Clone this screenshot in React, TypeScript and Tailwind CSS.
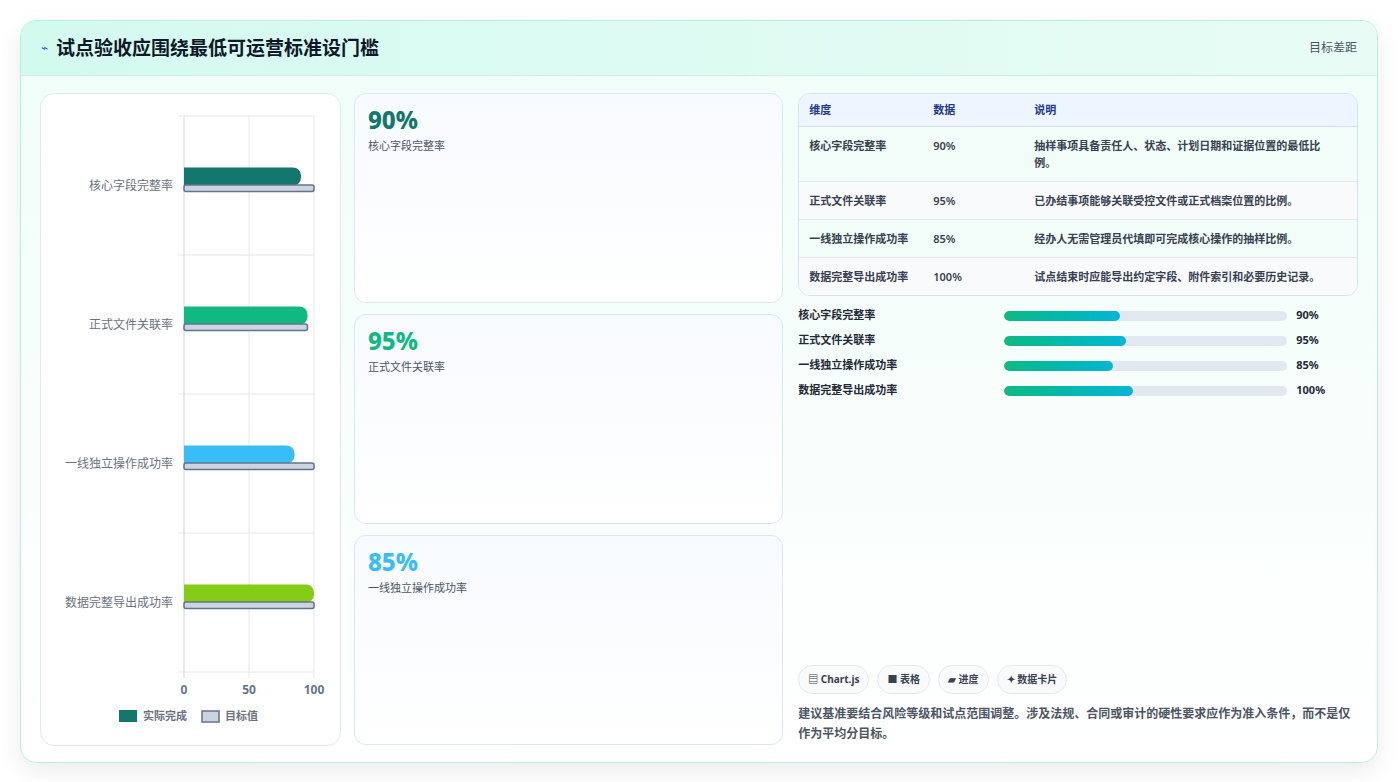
import React from "react";

const F = { fontFamily: '"Noto Sans","Noto Sans CJK SC",sans-serif' };

function Chart() {
  const cats = [
    { n: "核心字段完整率", a: 90, t: 100, c: "#13776d" },
    { n: "正式文件关联率", a: 95, t: 95, c: "#10b981" },
    { n: "一线独立操作成功率", a: 85, t: 100, c: "#38bdf8" },
    { n: "数据完整导出成功率", a: 100, t: 100, c: "#84cc16" },
  ];
  const x0 = 143, w = 130, y0 = 22, band = 139;
  return (
    <svg width="300" height="650" className="block">
      {[0, 1, 2, 3, 4].map((i) => (
        <line key={i} x1={137} x2={x0 + w} y1={y0 + i * band} y2={y0 + i * band} stroke="#e5e7eb" />
      ))}
      {[0, 0.5, 1].map((f, i) => (
        <line key={i} x1={x0 + f * w} x2={x0 + f * w} y1={y0} y2={y0 + 4 * band + 6} stroke={i === 0 ? "#d1d5db" : "#e5e7eb"} />
      ))}
      {cats.map((c, i) => {
        const cy = y0 + i * band + band / 2;
        const aw = (c.a / 100) * w, tw = (c.t / 100) * w;
        return (
          <g key={i}>
            <text x={132} y={cy + 4} textAnchor="end" fontSize="12" fill="#6b7280">{c.n}</text>
            <path d={`M${x0} ${cy - 18} H${x0 + aw - 8} a8 8 0 0 1 8 8 v2 a8 8 0 0 1 -8 8 H${x0} Z`} fill={c.c} />
            <rect x={x0} y={cy - 0.5} width={tw} height={6.5} rx={2} fill="#cbd5e1" stroke="#64748b" strokeWidth="1.5" />
          </g>
        );
      })}
      {[0, 50, 100].map((v, i) => (
        <text key={i} x={x0 + (v / 100) * w} y={600} textAnchor="middle" fontSize="12" fontWeight="700" fill="#64748b">{v}</text>
      ))}
      <rect x={78} y={616} width={18} height={12} fill="#13776d" />
      <text x={102} y={626} fontSize="11" fontWeight="700" fill="#6b7280">实际完成</text>
      <rect x={161} y={617} width={17} height={11} fill="#cbd5e1" stroke="#64748b" strokeWidth="1.5" />
      <text x={184} y={626} fontSize="11" fontWeight="700" fill="#6b7280">目标值</text>
    </svg>
  );
}

const rows = [
  ["核心字段完整率", "90%", "抽样事项具备责任人、状态、计划日期和证据位置的最低比例。"],
  ["正式文件关联率", "95%", "已办结事项能够关联受控文件或正式档案位置的比例。"],
  ["一线独立操作成功率", "85%", "经办人无需管理员代填即可完成核心操作的抽样比例。"],
  ["数据完整导出成功率", "100%", "试点结束时应能导出约定字段、附件索引和必要历史记录。"],
];
const prog = [["核心字段完整率", "90%", 116], ["正式文件关联率", "95%", 122], ["一线独立操作成功率", "85%", 109], ["数据完整导出成功率", "100%", 129]] as const;

export default function App() {
  return (
    <div style={F} className="w-[1399px] h-[782px] bg-white pt-[20px] px-[20px]">
      <div className="w-[1358px] h-[743px] rounded-[16px] border border-[#b9eee0] shadow-[0_8px_24px_rgba(0,0,0,0.08)] bg-gradient-to-b from-[#effdf8] to-white overflow-hidden flex flex-col">
        <div className="h-[55px] shrink-0 bg-gradient-to-r from-[#d3faef] to-[#e8fcf5] border-b border-[#cdeee4] flex items-center justify-between px-[20px]">
          <div className="flex items-center gap-[8px]">
            <span className="text-[#2563eb] text-[12px]">⌁</span>
            <span className="text-[19px] font-bold text-[#111827]">试点验收应围绕最低可运营标准设门槛</span>
          </div>
          <span className="text-[12px] text-[#4b5563] pr-[0px]">目标差距</span>
        </div>
        <div className="flex gap-[13px] px-[19px] pt-[17px]">
          <div className="w-[301px] h-[653px] bg-white rounded-[14px] border border-[#e5e7eb]">
            <Chart />
          </div>
          <div className="w-[431px] flex flex-col gap-[11px]">
            {[["90%", "核心字段完整率", "#13776d"], ["95%", "正式文件关联率", "#10b981"], ["85%", "一线独立操作成功率", "#38bdf8"]].map(([v, l, c]) => (
              <div key={v} className="h-[210px] rounded-[12px] border border-[#dbe7f3] bg-gradient-to-b from-[#f7faff] to-white px-[13px] pt-[10px]">
                <div className="text-[24px] font-extrabold leading-[32px]" style={{ color: c }}>{v}</div>
                <div className="text-[11px] text-[#4b5563] mt-[2px]">{l}</div>
              </div>
            ))}
          </div>
          <div className="w-[562px] ml-[2px] flex flex-col h-[653px]">
            <div className="rounded-[12px] border border-[#d6e2ef] overflow-hidden text-[11px]">
              <div className="flex h-[33px] items-center bg-[#eef5ff] border-b border-[#d6e2ef] font-bold text-[#1e3a8a]">
                <div className="w-[134px] pl-[10px]">维度</div>
                <div className="w-[101px]">数据</div>
                <div>说明</div>
              </div>
              {rows.map((r, i) => (
                <div key={i} className={`flex py-[10px] font-semibold text-[#374151] leading-[17px] ${i < 3 ? "border-b border-[#e5e7eb]" : ""} ${i % 2 === 0 ? "bg-[#f2fcf8]" : "bg-[#f8fafc]"}`}>
                  <div className="w-[134px] pl-[10px] shrink-0">{r[0]}</div>
                  <div className="w-[101px] shrink-0">{r[1]}</div>
                  <div className="w-[300px]">{r[2]}</div>
                </div>
              ))}
            </div>
            <div className="flex flex-col gap-[8px] mt-[11px]">
              {prog.map(([l, v, w]) => (
                <div key={l} className="flex items-center h-[17px] text-[11px] font-semibold text-[#1f2937]">
                  <div className="w-[206px]">{l}</div>
                  <div className="w-[283px] h-[10px] rounded-full bg-[#e2e8f0] overflow-hidden">
                    <div className="h-full rounded-full bg-gradient-to-r from-[#10b981] to-[#06b6d4]" style={{ width: w }} />
                  </div>
                  <div className="ml-[9px] font-bold">{v}</div>
                </div>
              ))}
            </div>
            <div className="mt-auto pb-[2px]">
              <div className="flex gap-[8px] mb-[10px]">
                {["▤ Chart.js", "■ 表格", "▰ 进度", "✦ 数据卡片"].map((t) => (
                  <span key={t} className="h-[29px] px-[9px] rounded-full border border-[#e5e7eb] bg-[#f8fafc] text-[10px] font-bold text-[#374151] flex items-center">{t}</span>
                ))}
              </div>
              <div className="text-[12px] leading-[20px] text-[#4b5563] font-semibold">建议基准要结合风险等级和试点范围调整。涉及法规、合同或审计的硬性要求应作为准入条件，而不是仅作为平均分目标。</div>
            </div>
          </div>
        </div>
      </div>
    </div>
  );
}
